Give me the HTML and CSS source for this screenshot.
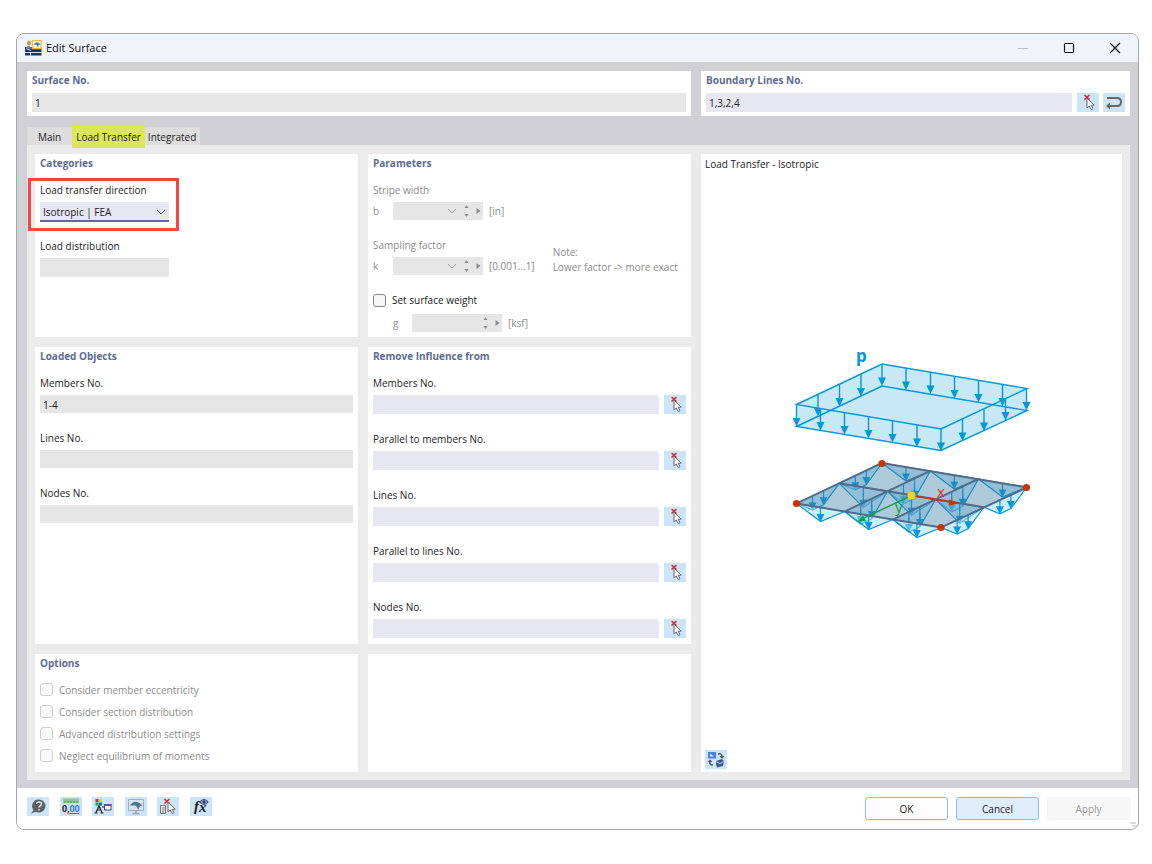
FILE: index.html
```html
<!DOCTYPE html>
<html lang="en">
<head>
<meta charset="utf-8">
<title>Edit Surface</title>
<link rel="stylesheet" href="styles.css">
</head>
<body>
<svg class="defs" aria-hidden="true">
  <defs>
    <symbol id="i-pick" viewBox="0 0 22 19">
      <path d="M7.500 2l5 4.500M12.500 2l-5 4.500" stroke="#e0202c" stroke-width="1.500" fill="none"/>
      <path d="M10 5v10l2.300-2 2 3.600 1.700-.9-1.900-3.500h3.100z" fill="#fff" stroke="#666" stroke-width="1"/>
    </symbol>
    <symbol id="i-down" viewBox="0 0 10 6"><path d="M1 1l4 4 4-4" fill="none" stroke="currentColor"/></symbol>
    <symbol id="i-spin" viewBox="0 0 20 14">
      <path d="M1.500 4l2-3 2 3zM1.500 10l2 3 2-3zM13.500 4v6l4-3z" fill="#8c8c8c"/>
    </symbol>
    <g id="arrow"><path d="M0 0V15" stroke="#0099dc" stroke-width="1.400"/><path d="M-4 13.500H4L0 22z" fill="#0099dc"/></g>
    <g id="arrow-s"><path d="M0 0V9" stroke="#0099dc" stroke-width="1.200"/><path d="M-4 6.500H4L0 14.500z" fill="#0099dc"/></g>
    <g id="side-outer"><path class="load" d="M0 0L16 6.500 27 1.300 42.800-20.200z"/><use href="#arrow-s" x="16" y="-7.500"/><use href="#arrow-s" x="27" y="-12.700"/></g>
    <g id="side-inner"><path class="load" d="M0 0L16 12.500 27 7.300 42.800-20.200z"/><use href="#arrow-s" x="16" y="-2"/><use href="#arrow-s" x="27" y="-7"/><path d="M16-7.500V0M27-12.700V0" stroke="#0099dc" stroke-width="1.200"/></g>
    <g id="front-outer"><path class="load" d="M0 0L24 18 48.200 8z"/><use href="#arrow-s" x="24" y="4"/></g>
    <g id="front-inner"><path class="load" d="M0 0L24 24 48.200 8z"/><use href="#arrow-s" x="24" y="10"/><path d="M24 4V12" stroke="#0099dc" stroke-width="1.200"/></g>
  </defs>
</svg>

<main class="window">
  <header class="titlebar">
    <svg class="app-icon" width="17" height="16" viewBox="0 0 17 16" aria-hidden="true">
      <path d="M0 7h16.500v8.500H0z" fill="#1d3272"/>
      <path d="M0 12.500h17M5.500 12v4M1 8.500l5 2" stroke="#d9e4f2" stroke-width="1"/>
      <path d="M0 8l4-2.500L8 9z" fill="#6f829d"/>
      <ellipse cx="4" cy="3" rx="2" ry="2.500" fill="#c79a38"/>
      <path d="M7.500.7h8.500v7.800H7.500z" fill="#fff" stroke="#e9c22e" stroke-width="1.300"/>
      <path d="M8.500 4.500Q12 0 15.500 4.500L13.500 5v2.500L11.500 5z" fill="#5579a0"/>
    </svg>
    <h1>Edit Surface</h1>
    <div class="window-buttons">
      <button type="button" aria-label="Minimize" disabled><svg width="12" height="12" viewBox="0 0 12 12"><path d="M1 6.500h10" stroke="#b9bdc2"/></svg></button>
      <button type="button" aria-label="Maximize"><svg width="12" height="12" viewBox="0 0 12 12"><rect x="1.500" y="1.500" width="9" height="9" rx="1" fill="none" stroke="#111" stroke-width="1.200"/></svg></button>
      <button type="button" aria-label="Close"><svg width="12" height="12" viewBox="0 0 12 12"><path d="M1 1l10 10M11 1L1 11" stroke="#111" stroke-width="1.200"/></svg></button>
    </div>
  </header>

  <form class="body">
    <div class="top">
      <section class="panel">
        <label class="heading" for="surface-no">Surface No.</label>
        <input class="box tight" id="surface-no" value="1" readonly>
      </section>
      <section class="panel">
        <label class="heading" for="boundary">Boundary Lines No.</label>
        <div class="pick-row tight">
          <input class="box editable" id="boundary" value="1,3,2,4">
          <button class="tool" type="button" aria-label="Select lines"><svg><use href="#i-pick"/></svg></button>
          <button class="tool second" type="button" aria-label="Reverse"><svg viewBox="0 0 22 19"><path d="M4 5h10q4 0 4 4t-4 4H6" fill="none" stroke="#686868" stroke-width="2"/><path d="M3 13l4-3.500v7z" fill="#686868"/></svg></button>
        </div>
      </section>
    </div>

    <nav class="tabs">
      <button type="button" class="tab main-tab">Main</button>
      <button type="button" class="tab active">Load Transfer</button>
      <button type="button" class="tab">Integrated</button>
    </nav>

    <div class="content">
      <section class="panel categories">
        <h2 class="heading">Categories</h2>
        <div class="field highlighted">
          <label for="direction">Load transfer direction</label>
          <div class="select-wrap">
            <select id="direction"><option>Isotropic | FEA</option></select>
            <svg width="10" height="6"><use href="#i-down"/></svg>
          </div>
        </div>
        <div class="field">
          <label for="distribution">Load distribution</label>
          <input class="box short" id="distribution" readonly>
        </div>
      </section>

      <section class="panel parameters">
        <h2 class="heading">Parameters</h2>
        <div class="field muted">
          <span>Stripe width</span>
          <div class="param">
            <label for="b">b</label>
            <div class="spin"><input class="box" id="b" disabled><svg class="chev" width="10" height="6"><use href="#i-down"/></svg><svg class="arrows" width="20" height="14"><use href="#i-spin"/></svg></div>
            <span>[in]</span>
          </div>
        </div>
        <div class="sampling muted">
          <div class="field">
            <span>Sampling factor</span>
            <div class="param">
              <label for="k">k</label>
              <div class="spin"><input class="box" id="k" disabled><svg class="chev" width="10" height="6"><use href="#i-down"/></svg><svg class="arrows" width="20" height="14"><use href="#i-spin"/></svg></div>
              <span>[0.001...1]</span>
            </div>
          </div>
          <p class="note">Note:<br>Lower factor -&gt; more exact</p>
        </div>
        <div class="weight">
          <label class="check"><input type="checkbox">Set surface weight</label>
          <div class="param indent muted">
            <label for="g">g</label>
            <div class="spin"><input class="box" id="g" disabled><svg class="arrows" width="20" height="14"><use href="#i-spin"/></svg></div>
            <span>[ksf]</span>
          </div>
        </div>
      </section>

      <section class="panel preview">
        <h2 class="caption">Load Transfer - Isotropic</h2>
        <div class="drawing">
          <svg width="260" height="244" viewBox="781 337 260 244" role="img" aria-label="Isotropic load transfer">
            <path d="M796.500 402.500L882 362 1027 386.500V408.500L941 448.500 796.500 424.500z" fill="#c9e8f6"/>
            <path d="M796.500 402.500L882 362 1027 386.500 941 427zM796.500 424.500L882 384 1027 408.500 941 448.500z" fill="none" stroke="#0099dc" stroke-width="1.400"/>
            <use href="#arrow" x="796.500" y="402.500"/><use href="#arrow" x="818" y="392.500"/><use href="#arrow" x="839.500" y="382.500"/><use href="#arrow" x="861" y="372.500"/><use href="#arrow" x="882" y="362"/>
            <use href="#arrow" x="906" y="366"/><use href="#arrow" x="930.500" y="370"/><use href="#arrow" x="954.500" y="374.500"/><use href="#arrow" x="978.500" y="378.500"/><use href="#arrow" x="1002.500" y="382.500"/><use href="#arrow" x="1026.500" y="386.500"/>
            <use href="#arrow" x="820.500" y="406.500"/><use href="#arrow" x="844.500" y="410.500"/><use href="#arrow" x="868.500" y="414.500"/><use href="#arrow" x="892.500" y="418.500"/><use href="#arrow" x="917" y="423"/><use href="#arrow" x="941" y="427"/>
            <use href="#arrow" x="962.500" y="417"/><use href="#arrow" x="984" y="407"/><use href="#arrow" x="1005.500" y="396.500"/>
            <text class="p" x="856" y="360">p</text>

            <use href="#front-outer" x="882" y="461"/><use href="#front-outer" x="930.300" y="469"/><use href="#front-outer" x="978.500" y="477"/>
            <use href="#side-outer" x="839.300" y="481.300"/><use href="#side-outer" x="796.500" y="501.500"/>
            <use href="#side-inner" x="887.500" y="489.300"/><use href="#side-inner" x="935.700" y="497.300"/>
            <use href="#front-inner" x="839.300" y="481.300"/><use href="#front-inner" x="887.500" y="489.300"/><use href="#front-inner" x="935.700" y="497.300"/>
            <use href="#side-inner" x="844.700" y="509.500"/><use href="#side-inner" x="892.900" y="517.500"/>
            <use href="#side-outer" x="983.900" y="505.300"/><use href="#side-outer" x="941.100" y="525.500"/>
            <use href="#front-outer" x="796.500" y="501.500"/><use href="#front-outer" x="844.700" y="509.500"/><use href="#front-outer" x="892.900" y="517.500"/>
            <path d="M796.500 501.500L882 461 1027 485.500 941 525.500z" fill="#3f7ea5" fill-opacity=".42"/>
            <path d="M796.500 501.500L882 461 1027 485.500 941 525.500zM839.300 481.300L984 505.300M844.700 509.500L930.300 469M893 517.500L978.500 477" fill="none" stroke="#536b88" stroke-width="1.900"/>
            <path d="M911.500 493.500L862 517" stroke="#0da34b" stroke-width="1.400"/><path d="M857.500 519.500l5.500-6 3 5.500z" fill="#0da34b"/>
            <path d="M911.500 493.500L950 500" stroke="#cc3300" stroke-width="1.400"/><path d="M959 501l-10-3.500v6z" fill="#cc3300"/>
            <text class="axis" x="937" y="495" fill="#d93a1d">x</text>
            <text class="axis" x="895" y="510" fill="#0da34b">y</text>
            <g fill="#cc3300"><circle cx="796.500" cy="501.500" r="3.600"/><circle cx="882" cy="461.500" r="3.600"/><circle cx="1026.500" cy="485.500" r="3.600"/><circle cx="941" cy="525.500" r="3.600"/></g>
            <circle cx="911.500" cy="493.500" r="4" fill="#ffd500"/>
          </svg>
        </div>
        <button class="tool" type="button" aria-label="Switch picture">
          <svg viewBox="0 0 22 19"><path d="M3 2h8v6.500H3z" fill="#4f7de8"/><path d="M5 3.500v3h4z" fill="#dbe7ff"/><path d="M13 4q4-1 4 3M5 11q-1 4 3 4" fill="none" stroke="#555" stroke-width="1.400"/><path d="M14.500 6h5L17 9zM2.500 12L5 9.500 7.500 12z" fill="#555"/><path d="M11 11l6-2 2 2-1 5-6 1.500-1-3z" fill="#445c8d"/><path d="M11 11.500l4 2 4-2" fill="none" stroke="#b7c7df"/></svg>
        </button>
      </section>

      <section class="panel loaded">
        <h2 class="heading">Loaded Objects</h2>
        <div class="field"><label for="lo-members">Members No.</label><input class="box" id="lo-members" value="1-4" readonly></div>
        <div class="field"><label for="lo-lines">Lines No.</label><input class="box" id="lo-lines" readonly></div>
        <div class="field"><label for="lo-nodes">Nodes No.</label><input class="box" id="lo-nodes" readonly></div>
      </section>

      <section class="panel">
        <h2 class="heading">Remove Influence from</h2>
        <div class="field"><label for="ri-1">Members No.</label><div class="pick-row"><input class="box editable" id="ri-1"><button class="tool" type="button" aria-label="Pick members"><svg><use href="#i-pick"/></svg></button></div></div>
        <div class="field"><label for="ri-2">Parallel to members No.</label><div class="pick-row"><input class="box editable" id="ri-2"><button class="tool" type="button" aria-label="Pick parallel members"><svg><use href="#i-pick"/></svg></button></div></div>
        <div class="field"><label for="ri-3">Lines No.</label><div class="pick-row"><input class="box editable" id="ri-3"><button class="tool" type="button" aria-label="Pick lines"><svg><use href="#i-pick"/></svg></button></div></div>
        <div class="field"><label for="ri-4">Parallel to lines No.</label><div class="pick-row"><input class="box editable" id="ri-4"><button class="tool" type="button" aria-label="Pick parallel lines"><svg><use href="#i-pick"/></svg></button></div></div>
        <div class="field"><label for="ri-5">Nodes No.</label><div class="pick-row"><input class="box editable" id="ri-5"><button class="tool" type="button" aria-label="Pick nodes"><svg><use href="#i-pick"/></svg></button></div></div>
      </section>

      <section class="panel">
        <h2 class="heading">Options</h2>
        <div class="options muted">
          <label class="check"><input type="checkbox" disabled>Consider member eccentricity</label>
          <label class="check"><input type="checkbox" disabled>Consider section distribution</label>
          <label class="check"><input type="checkbox" disabled>Advanced distribution settings</label>
          <label class="check"><input type="checkbox" disabled>Neglect equilibrium of moments</label>
        </div>
      </section>

      <section class="panel"></section>
    </div>
  </form>

  <footer class="footer">
    <div class="toolbar">
      <button class="tool" type="button" aria-label="Help"><svg viewBox="0 0 22 19"><path d="M12 2.500a6.500 6.500 0 1 1-3 12.300L4 16.500 6.500 13A6.500 6.500 0 0 1 12 2.500z" fill="#5f5f5f"/><path d="M9.500 7q.3-2 2.500-2 2.500 0 2.500 2 0 1.200-1.500 2-1 .6-1 1.500M12 12v1.500" fill="none" stroke="#dcebf7" stroke-width="1.500"/></svg></button>
      <button class="tool" type="button" aria-label="Units"><svg viewBox="0 0 22 19"><path d="M3 1.500h16v4.500H3z" fill="#86cf78"/><path d="M5 6V4M8 6V4M11 6V4M14 6V4M17 6V4" stroke="#4da045"/><text x="2" y="15" class="digits">0,<tspan fill="#2f74dd">00</tspan></text><path d="M9.500 16.500H19" stroke="#2f74dd"/></svg></button>
      <button class="tool" type="button" aria-label="Display"><svg viewBox="0 0 22 19"><path d="M3.500 2h3v3h-3z" fill="#e22929"/><path d="M7 2h3v3H7z" fill="#efd900"/><path d="M3.500 5.500h3v3h-3z" fill="#1b9d38"/><path d="M7 5.500h3v3H7z" fill="#2459dd"/><path d="M4 15.500L7 9l3 6.500M5 13h4M2.500 16h3M8.500 16h3M10 10h3" fill="none" stroke="#222" stroke-width="1.200"/><path d="M12.500 7.500h6.500v5.500h-6.500z" fill="#fff" stroke="#39496f"/><path d="M12 7h7.500v2H12z" fill="#3760b2"/></svg></button>
      <button class="tool" type="button" aria-label="View"><svg viewBox="0 0 22 19"><path d="M3.500 2.500h15v11h-15z" fill="#d7e4ed" stroke="#a0acb7"/><path d="M5 8.500Q10 1 17.500 8.500l-2.500.5-2 4q-1-4.500-3.500-4.500z" fill="#4d7597"/><path d="M11 13.500V16M7.500 16.500h7" stroke="#98a5b0" stroke-width="1.500"/></svg></button>
      <button class="tool" type="button" aria-label="Select copy"><svg viewBox="0 0 22 19"><path d="M7.500 2l5 4.500M12.500 2l-5 4.500" stroke="#e0202c" stroke-width="1.500"/><path d="M3.500 8.500h5v8h-5z" fill="#eee" stroke="#777"/><path d="M5 11h2.500M5 13h2.500M5 15h2.500" stroke="#777"/><path d="M11 5v10l2.300-2 2 3.600 1.700-.9-1.900-3.500h3.100z" fill="#fff" stroke="#666"/></svg></button>
      <button class="tool" type="button" aria-label="Formula"><svg viewBox="0 0 22 19"><text x="4" y="14" class="fx">f</text><text x="9" y="15" class="fx">x</text><path d="M10 5q4-5 8 0-4 5-8 0z" fill="#e0e4f2" stroke="#25356f" stroke-width="1.200"/><circle cx="14" cy="5" r="1.800" fill="#25356f"/></svg></button>
    </div>
    <div class="actions">
      <button class="action" type="button">OK</button>
      <button class="action focused" type="button">Cancel</button>
      <button class="action" type="button" disabled>Apply</button>
    </div>
    <svg class="grip" width="8" height="8" viewBox="0 0 8 8" aria-hidden="true"><path d="M0 2h6M2 5h5M5 7.500h2" stroke="#b5b5b5"/></svg>
  </footer>
</main>
</body>
</html>
```
FILE: styles.css
```css
* { box-sizing: border-box; }
body {
  margin: 0;
  min-height: 100vh;
  padding: 33px 13px 34px 16px;
  display: flex;
  background: #fff;
  color: #222;
  font: 10px/16px "Open Sans", "Noto Sans", sans-serif;
}
h1, h2, p { margin: 0; }
input, select, button { font: inherit; color: inherit; margin: 0; border: 0; border-radius: 0; }
svg { display: block; }
.defs { position: absolute; width: 0; height: 0; }

.window {
  flex: 1;
  min-width: 0;
  display: flex;
  flex-direction: column;
  border: 1px solid #a6a6a8;
  border-radius: 8px;
  overflow: hidden;
}
.titlebar { display: flex; align-items: center; height: 28px; padding-left: 8px; background: #eff3fa; }
.titlebar h1 { flex: 1; margin-left: 4px; font-size: 11px; font-weight: 400; color: #111; }
.window-buttons { display: flex; }
.window-buttons button { width: 46px; height: 28px; padding: 0; background: none; display: grid; place-items: center; }

.body { flex: 1; display: flex; flex-direction: column; padding: 9px 8px 8px 10px; background: #d1d0d5; }
.top { display: grid; grid-template-columns: minmax(0, 664fr) minmax(0, 429fr); gap: 10px; }
.top .panel { padding-bottom: 4px; }
.panel { display: flex; flex-direction: column; padding: 1px 5px 3px; background: #fff; min-width: 0; }
.heading { font-size: 10px; font-weight: 700; line-height: 16px; color: #5b6b95; }

.box { display: block; width: 100%; height: 19px; padding: 1px 3px 0; background: #e6e6e6; }
.box.editable { background: #e7e7f2; }
.box.short { width: 129px; }
.loaded .box { height: 18px; }
.tight { margin-top: 5px; }
.pick-row { display: flex; }
.pick-row .box { flex: 1; min-width: 0; }
.pick-row .tool { margin-left: 5px; }
.pick-row .tool.second { margin-left: 4px; }
.tool { flex: none; width: 22px; height: 19px; padding: 0; background: #cce4f7; }
.tool svg { width: 22px; height: 19px; }

.tabs { display: flex; align-items: flex-start; height: 18px; margin-top: 11px; }
.tab { height: 18px; padding: 2px 4px 0 3px; background: #dddddd; position: relative; z-index: 1; }
.tab.main-tab { padding: 2px 11px 0; }
.tab.active { height: 22px; margin-top: -1px; padding: 0 4px; background: #dbe65c; }

.content {
  flex: 1;
  display: grid;
  grid-template-columns: minmax(0, 323fr) minmax(0, 323fr) minmax(0, 421fr);
  grid-template-rows: 183fr 296fr 118fr;
  gap: 10px;
  padding: 9px 8px 8px;
  background: #ebebeb;
}
.field { display: flex; flex-direction: column; gap: 4px; margin-bottom: 17px; }
.heading + .field { margin-top: 11px; }
.panel > .field:last-child { margin-bottom: 0; }
.muted { color: #8b8b8b; }

.highlighted { position: relative; width: 129px; margin-bottom: 16px; }
.highlighted label { white-space: nowrap; }
.highlighted::after {
  content: "";
  position: absolute;
  inset: -4px -10px -9px -12px;
  border: 3px solid #fb4343;
  pointer-events: none;
}
.select-wrap { position: relative; }
.select-wrap select { display: block; width: 100%; height: 20px; padding: 1px 3px 0; appearance: none; background: #e7e7f2; border-bottom: 2px solid #6264a7; }
.select-wrap svg { position: absolute; right: 3px; top: 7px; color: #555; pointer-events: none; }

.param { display: grid; grid-template-columns: 14px 90px auto; column-gap: 6px; align-items: center; justify-content: start; }
.spin { position: relative; height: 18px; }
.spin .box { height: 18px; }
.chev { position: absolute; left: 54px; top: 6px; color: #999; }
.arrows { position: absolute; right: 0; top: 2px; }
.sampling { display: flex; gap: 18px; }
.note { line-height: 15px; margin-top: 8px; white-space: nowrap; }
.indent { margin: 6px 0 0 20px; grid-template-columns: 13px 90px auto; }

.check { display: flex; align-items: center; gap: 6px; height: 16px; }
.check input { appearance: none; width: 13px; height: 13px; border: 1px solid #858585; border-radius: 3px; background: #f6f6f6; }
.check input:disabled { border-color: #cfcfcf; background: #f9f9f9; }
.options { display: flex; flex-direction: column; gap: 6px; margin-top: 11px; }

.preview { grid-column: 3; grid-row: 1 / 4; padding: 2px 5px 3px 4px; }
.caption { font-size: 10px; font-weight: 400; line-height: 16px; }
.drawing { flex: 1; display: grid; place-items: center; }
.load { fill: #a6dcf5; fill-opacity: .5; stroke: #0099dc; stroke-width: 1.2px; }
.p { font: 700 17px "Noto Sans", sans-serif; fill: #0099dc; }
.axis { font: 15px "Noto Sans", sans-serif; }
.digits { font: 700 9px Roboto, sans-serif; fill: #222; }
.fx { font: italic 700 15px "Liberation Serif", serif; fill: #222; }

.footer { position: relative; display: flex; justify-content: space-between; padding: 9px 8px 9px 10px; background: #fff; }
.toolbar { display: flex; justify-content: space-between; width: 185px; }
.actions { display: flex; gap: 8px; }
.action { width: 83px; height: 23px; border: 1px solid #88bfe9; border-radius: 3px; background: #fdfdfd; }
.action.focused { background: #deedf9; }
.action:disabled { border-color: #f3f3f3; background: #f7f7f7; color: #999; }
.grip { position: absolute; right: 0; bottom: 0; }
```
